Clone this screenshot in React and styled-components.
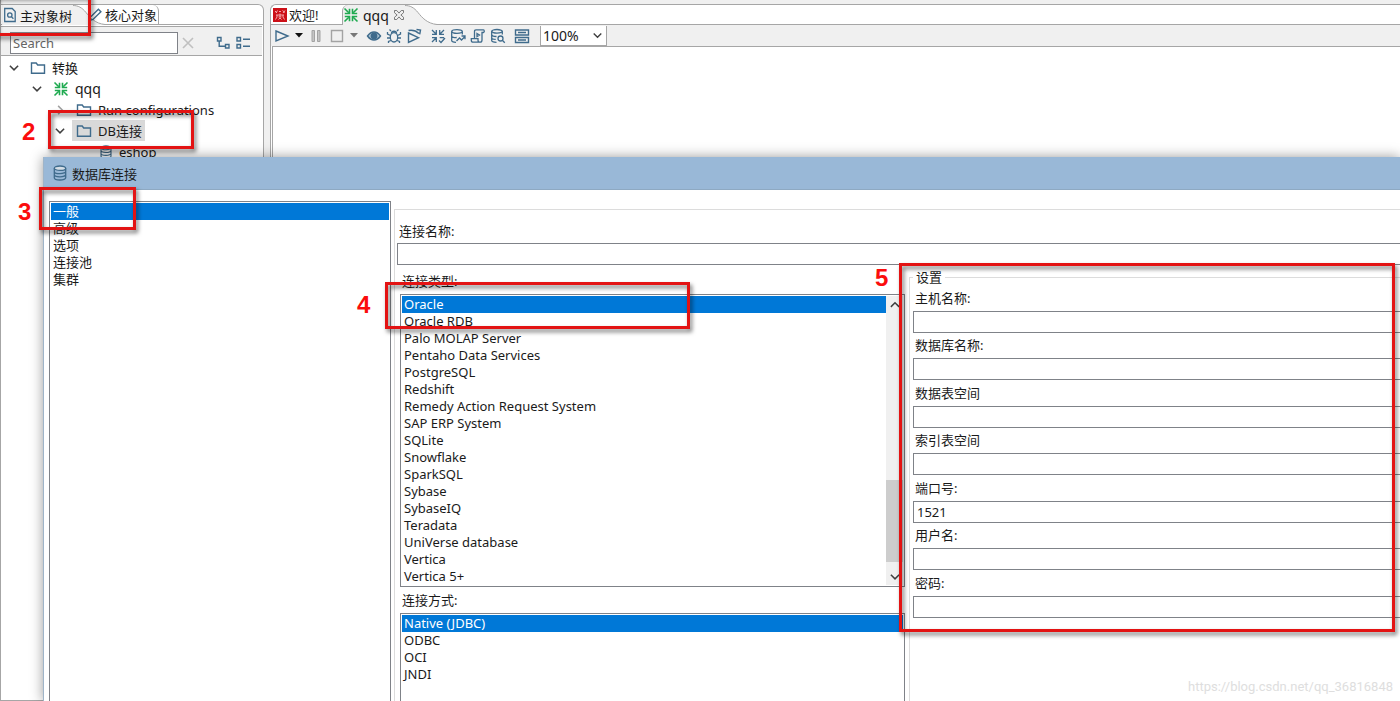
import React, { useState } from 'react';
import styled, { createGlobalStyle, css } from 'styled-components';

const colors = {
  chrome: '#f0f0f0',
  line: '#a6a6a6',
  softLine: '#dcdcdc',
  field: '#7f8288',
  icon: '#3f6b8c',
  green: '#1faa50',
  select: '#0078d7',
  title: '#99b8d7',
  mark: '#e31313',
};

const categories = ['一般', '高级', '选项', '连接池', '集群'];

const databases = [
  'Oracle',
  'Oracle RDB',
  'Palo MOLAP Server',
  'Pentaho Data Services',
  'PostgreSQL',
  'Redshift',
  'Remedy Action Request System',
  'SAP ERP System',
  'SQLite',
  'Snowflake',
  'SparkSQL',
  'Sybase',
  'SybaseIQ',
  'Teradata',
  'UniVerse database',
  'Vertica',
  'Vertica 5+',
];

const accessTypes = ['Native (JDBC)', 'ODBC', 'OCI', 'JNDI'];

const settings = [
  { id: 'host', label: '主机名称:' },
  { id: 'database', label: '数据库名称:' },
  { id: 'dataSpace', label: '数据表空间' },
  { id: 'indexSpace', label: '索引表空间' },
  { id: 'port', label: '端口号:', value: '1521' },
  { id: 'user', label: '用户名:' },
  { id: 'password', label: '密码:', type: 'password' },
];

const tree = [
  { label: '转换', depth: 0, icon: 'folder', open: true },
  { label: 'qqq', depth: 1, icon: 'transform', open: true, large: true },
  { label: 'Run configurations', depth: 2, icon: 'folder', open: false },
  { label: 'DB连接', depth: 2, icon: 'folder', open: true, selected: true },
  { label: 'eshop', depth: 3, icon: 'database' },
];

/* Icons */

const Icon = ({ size = 16, color = colors.icon, width = 1.4, children }) => (
  <svg
    width={size}
    height={size}
    viewBox="0 0 16 16"
    fill="none"
    stroke={color}
    strokeWidth={width}
    aria-hidden="true"
  >
    {children}
  </svg>
);

const FolderIcon = () => (
  <Icon>
    <path d="M1.500 13.300V3h4.700l1.500 2h6.800v8.300z" />
  </Icon>
);

const TransformIcon = () => (
  <Icon color={colors.green} width={1.6}>
    <path d="M1.500 1.500l4.300 4.300M14.500 1.500l-4.300 4.300M1.500 14.500l4.300-4.300M14.500 14.500l-4.300-4.300" />
    <path d="M6.500 1.800v4.700H1.800M9.500 1.800v4.700h4.700M6.500 14.200V9.500H1.800M9.500 14.200V9.500h4.700" />
  </Icon>
);

const DatabaseIcon = ({ size = 16 }) => (
  <Icon size={size} width={1.3}>
    <ellipse cx="8" cy="3.200" rx="5.700" ry="2.200" fill="#d5dee6" />
    <path d="M2.300 3.200v9.600c0 1.200 2.500 2.200 5.700 2.200s5.700-1 5.700-2.200V3.200M2.300 6.400c0 1.200 2.500 2.200 5.700 2.200s5.700-1 5.700-2.200M2.300 9.600c0 1.200 2.500 2.200 5.700 2.200s5.700-1 5.700-2.200" />
  </Icon>
);

const TreeDocIcon = () => (
  <Icon width={1.3}>
    <path d="M2.700 1.500h7.500l3 3v10H2.700z" />
    <circle cx="7.800" cy="8" r="2.200" />
    <path d="M9.400 9.600l2 2.200" />
  </Icon>
);

const PencilIcon = () => (
  <Icon>
    <path d="M2.500 13.500l1-3.500L11.400 2.200l2.500 2.500L6 12.500z" />
  </Icon>
);

const ClearIcon = () => (
  <Icon color="#c0c0c0" width={1.6}>
    <path d="M3 3l10 10M13 3L3 13" />
  </Icon>
);

const ExpandIcon = () => (
  <Icon>
    <path d="M2.500 2.500h3.500v3.500H2.500zM10.500 9.500H14V13h-3.500zM4.200 6v5.300h6.300" />
  </Icon>
);

const CollapseIcon = () => (
  <Icon>
    <path d="M2 2.500h3.500V6H2zM2 9.500h3.500V13H2zM8 4.200h7M8 11.300h7" />
  </Icon>
);

const CloseTabIcon = () => (
  <Icon size={12} color="#6e6e6e" width={1.2}>
    <path d="M2 2h3l3 3.500L11 2h3v3l-3.500 3 3.500 3v3h-3l-3-3.500L5 14H2v-3l3.500-3L2 5z" />
  </Icon>
);

const WelcomeIcon = () => (
  <svg width="14" height="14" viewBox="0 0 14 14" aria-hidden="true">
    <rect width="14" height="14" fill="#cc1017" />
    <path
      d="M2 3l2 2M4.500 2.500L3 5M6 3.500h2M9.500 2.500l2.500 2M12 2.500L10 5M3 7h8M4 7v2l-1.500 2.500M10 7v2l1.500 2.500M5.500 9h3M7 5.500V9M5.500 11.500L7 10l1.500 1.500"
      stroke="#f7b9bb"
      strokeWidth="0.9"
      fill="none"
    />
  </svg>
);

const RunIcon = () => (
  <Icon>
    <path d="M2 3l12 5L2 13z" />
  </Icon>
);

const PauseIcon = () => (
  <Icon color="#a3a3a3" width={1}>
    <path d="M4 2.500h2.500v11H4zM9.500 2.500H12v11H9.500z" fill="#c4c4c4" />
  </Icon>
);

const StopIcon = () => (
  <Icon color="#a3a3a3">
    <path d="M2.500 2.500h11v11h-11z" />
  </Icon>
);

const PreviewIcon = () => (
  <Icon>
    <path d="M1.500 8c2-2.800 4-4 6.500-4s4.500 1.200 6.500 4c-2 2.800-4 4-6.500 4S3.500 10.800 1.500 8z" fill="#a9c0d1" />
    <circle cx="8" cy="8" r="2.700" fill={colors.icon} />
  </Icon>
);

const DebugIcon = () => (
  <Icon width={1.3}>
    <ellipse cx="8" cy="9.300" rx="3.700" ry="4.700" />
    <path d="M5.500 5.500c0-3 5-3 5 0M5 3L3.500 1.500M11 3l1.500-1.500M4.500 7.500L1.500 6V4M11.500 7.500l3-1.500V4M4.300 10H1M11.700 10H15M5 12.500l-2.500 1V15M11 12.500l2.500 1V15" />
  </Icon>
);

const ReplayIcon = () => (
  <Icon>
    <path d="M2.500 5l10 4.700-10 4.800zM2.500 2.500c4-.8 7.500.2 10.500 3M10.500 1.500l4 .5-.8 4.300" />
  </Icon>
);

const VerifyIcon = () => (
  <Icon width={1.3}>
    <path d="M2 2l4 4M14 2l-4 4M2 14l4-4M6.300 2v4.300H2M9.700 2v4.300H14M6.300 14V9.700H2M9.700 9.700H14M9 12.500l2 2 4-4.500" />
  </Icon>
);

const ImpactIcon = () => (
  <Icon width={1.3}>
    <ellipse cx="7" cy="3.500" rx="5.300" ry="1.800" />
    <path d="M1.700 3.500v9c0 1 2 1.800 4.300 1.800M12.300 3.500v3M1.700 8c0 1.300 3 1.800 5 1.500M6.500 13l3-3 2 2 3.500-3.500M11.500 8H15v3.300" />
  </Icon>
);

const SqlIcon = () => (
  <Icon width={1.3}>
    <path d="M4.500 10.500V3.500c0-1 .5-1.700 1.500-1.700h7.500c1 0 1 2.700 0 2.700H12V12c0 1.300-.8 2.200-2 2.200H3c-1.300 0-1.700-1-1.700-2v-1.500H8V12c0 1 .5 2.200 1.800 2.200" />
    <path d="M7 5.500l2.500 1.500L7 8.500z" />
  </Icon>
);

const ExploreIcon = () => (
  <Icon width={1.3}>
    <ellipse cx="7" cy="3.300" rx="5.300" ry="1.800" />
    <path d="M1.700 3.300v9.200c0 1 2 1.800 4.800 1.800M12.300 3.300v3.200M1.700 6.500C1.700 8 4 8.500 6.500 8.500M1.700 9.800c0 1 2 1.600 4 1.600" />
    <circle cx="10.500" cy="10.500" r="2.500" />
    <path d="M12.300 12.300l2.500 2.500" />
  </Icon>
);

const ResultsIcon = () => (
  <Icon>
    <path d="M1.500 2h13v5h-13zM1.500 9.500h13v5h-13zM4 4.500h8M4 12h8" />
  </Icon>
);

const Chevron = ({ dir = 'down', color = '#404040', size = 12 }) => {
  const paths = {
    down: 'M2.500 5l5.500 5.500L13.500 5',
    up: 'M2.500 10.500L8 5l5.500 5.500',
    right: 'M5.500 2.500L11 8l-5.500 5.500',
  };
  return (
    <Icon size={size} color={color} width={2}>
      <path d={paths[dir]} />
    </Icon>
  );
};

const Caret = ({ color = '#111' }) => (
  <svg width="8" height="5" viewBox="0 0 8 5" aria-hidden="true">
    <path d="M0 0h8L4 4.500z" fill={color} />
  </svg>
);

// Slanted right edge of the active tab
const TabEdge = () => (
  <svg width="32" height="20" viewBox="0 0 32 20" aria-hidden="true">
    <path d="M0 .5c5 0 9 2 13 7s9 11 19 12V20H0z" fill={colors.chrome} />
    <path d="M0 .5c5 0 9 2 13 7s9 11 19 12" fill="none" stroke={colors.line} />
  </svg>
);

const treeIcons = {
  folder: <FolderIcon />,
  transform: <TransformIcon />,
  database: <DatabaseIcon size={14} />,
};

const ListBox = ({ label, items, scroll, grow }) => {
  const [active, setActive] = useState(items[0]);

  return (
    <ListFrame $grow={grow}>
      <List role="listbox" aria-label={label}>
        {items.map((item) => (
          <ListItem
            key={item}
            role="option"
            aria-selected={item === active}
            $active={item === active}
            onClick={() => setActive(item)}
          >
            {item}
          </ListItem>
        ))}
      </List>
      {scroll && (
        <ScrollBar>
          <ScrollButton type="button" aria-label="Scroll up">
            <Chevron dir="up" />
          </ScrollButton>
          <ScrollThumb />
          <ScrollButton type="button" aria-label="Scroll down">
            <Chevron />
          </ScrollButton>
        </ScrollBar>
      )}
    </ListFrame>
  );
};

const Explorer = () => (
  <ExplorerPane>
    <TabBar>
      <Tab type="button" $active>
        <TreeDocIcon />
        主对象树
      </Tab>
      <TabEdgeSlot>
        <TabEdge />
      </TabEdgeSlot>
      <Tab type="button" $last>
        <PencilIcon />
        核心对象
      </Tab>
    </TabBar>
    <SearchBar>
      <SearchInput placeholder="Search" aria-label="Search" />
      <IconButton type="button" aria-label="Clear">
        <ClearIcon />
      </IconButton>
      <SearchActions>
        <IconButton type="button" aria-label="Expand all">
          <ExpandIcon />
        </IconButton>
        <IconButton type="button" aria-label="Collapse all">
          <CollapseIcon />
        </IconButton>
      </SearchActions>
    </SearchBar>
    <Tree role="tree">
      {tree.map((node) => (
        <TreeRow key={node.label} role="treeitem" $depth={node.depth}>
          <TreeToggle>
            {node.open === true && <Chevron />}
            {node.open === false && <Chevron dir="right" color="#a0a0a0" />}
          </TreeToggle>
          <TreeLabel $selected={node.selected} $large={node.large}>
            {treeIcons[node.icon]}
            {node.label}
          </TreeLabel>
        </TreeRow>
      ))}
    </Tree>
  </ExplorerPane>
);

const Editor = () => (
  <EditorPane>
    <TabBar>
      <Tab type="button" $wide>
        <WelcomeIcon />
        欢迎!
      </Tab>
      <Tab type="button" $active $large>
        <TransformIcon />
        qqq
        <CloseTabIcon />
      </Tab>
      <TabEdgeSlot>
        <TabEdge />
      </TabEdgeSlot>
    </TabBar>
    <Toolbar>
      <ToolGroup $loose>
        <IconButton type="button" aria-label="Run"><RunIcon /></IconButton>
        <IconButton type="button" aria-label="Run options"><Caret /></IconButton>
        <IconButton type="button" aria-label="Pause"><PauseIcon /></IconButton>
        <IconButton type="button" aria-label="Stop"><StopIcon /></IconButton>
        <IconButton type="button" aria-label="Stop options"><Caret color="#777" /></IconButton>
      </ToolGroup>
      <ToolGroup>
        <IconButton type="button" aria-label="Preview"><PreviewIcon /></IconButton>
        <IconButton type="button" aria-label="Debug"><DebugIcon /></IconButton>
        <IconButton type="button" aria-label="Replay"><ReplayIcon /></IconButton>
      </ToolGroup>
      <ToolGroup>
        <IconButton type="button" aria-label="Verify"><VerifyIcon /></IconButton>
        <IconButton type="button" aria-label="Impact"><ImpactIcon /></IconButton>
        <IconButton type="button" aria-label="SQL"><SqlIcon /></IconButton>
        <IconButton type="button" aria-label="Explore database"><ExploreIcon /></IconButton>
      </ToolGroup>
      <IconButton type="button" aria-label="Show results"><ResultsIcon /></IconButton>
      <ZoomBox>
        <ZoomSelect aria-label="Zoom" defaultValue="100%">
          <option>200%</option>
          <option>100%</option>
          <option>50%</option>
        </ZoomSelect>
        <Chevron size={11} />
      </ZoomBox>
    </Toolbar>
    <Canvas />
  </EditorPane>
);

const ConnectionDialog = () => (
  <Dialog role="dialog" aria-labelledby="dialog-title">
    <TitleBar id="dialog-title">
      <DatabaseIcon />
      数据库连接
    </TitleBar>
    <DialogBody>
      <CategoryColumn>
        <ListBox label="类别" items={categories} grow />
      </CategoryColumn>
      <Panel>
        <FieldLabel htmlFor="name">连接名称:</FieldLabel>
        <TextInput id="name" />
        <PanelColumns>
          <TypeColumn>
            <ListTitle>连接类型:</ListTitle>
            <ListBox label="连接类型" items={databases} scroll />
            <ListTitle>连接方式:</ListTitle>
            <ListBox label="连接方式" items={accessTypes} grow />
          </TypeColumn>
          <Settings>
            <Legend>设置</Legend>
            <SettingsGrid>
              {settings.map(({ id, label, value, type = 'text' }) => (
                <Field key={id}>
                  <SettingLabel htmlFor={id}>{label}</SettingLabel>
                  <TextInput id={id} type={type} defaultValue={value} />
                </Field>
              ))}
            </SettingsGrid>
          </Settings>
        </PanelColumns>
      </Panel>
    </DialogBody>
  </Dialog>
);

const App = () => (
  <Desktop>
    <GlobalStyle />
    <Workbench>
      <Explorer />
      <Editor />
    </Workbench>
    <ConnectionDialog />
    <Mark $left={-6} $top={-6} $width={97} $height={42} />
    <Mark $left={48} $top={110} $width={146} $height={39} />
    <Mark $left={39} $top={187} $width={97} $height={43} />
    <Mark $left={385} $top={282} $width={305} $height={47} />
    <Mark $left={899} $top={263} $width={496} $height={369} />
    <Step $left={22} $top={118}>2</Step>
    <Step $left={18} $top={198}>3</Step>
    <Step $left={357} $top={291}>4</Step>
    <Step $left={875} $top={264}>5</Step>
    <Watermark>https://blog.csdn.net/qq_36816848</Watermark>
  </Desktop>
);

// Styled Components
const GlobalStyle = createGlobalStyle`
  * {
    box-sizing: border-box;
  }

  body {
    margin: 0;
  }

  body, button, input, select {
    font-family: 'Noto Sans', 'Noto Sans CJK SC', sans-serif;
    font-size: 13px;
    color: #1a1a1a;
  }

  svg {
    display: block;
    flex: none;
  }
`;

const Desktop = styled.div`
  position: relative;
  display: flex;
  min-height: 100vh;
  overflow: hidden;
  background-color: ${colors.chrome};
`;

const Workbench = styled.div`
  display: flex;
  flex: 1;
  gap: 6px;
  padding-top: 4px;
  border-left: 1px solid ${colors.line};
`;

const ExplorerPane = styled.section`
  display: flex;
  flex-direction: column;
  width: 263px;
  border: 1px solid ${colors.line};
  border-left: none;
  border-top-right-radius: 6px;
  background-color: white;
`;

const EditorPane = styled.section`
  display: flex;
  flex: 1;
  flex-direction: column;
  border: 1px solid ${colors.line};
  border-right: none;
  border-top-left-radius: 6px;
  background-color: white;
`;

const TabBar = styled.div`
  display: flex;
  height: 20px;
  padding-left: 1px;
  border-bottom: 1px solid ${colors.line};
`;

const Tab = styled.button`
  display: flex;
  align-items: center;
  gap: 2px;
  height: 19px;
  padding: 0 1px 0 0;
  border: none;
  background: none;
  font-size: ${(props) => (props.$large ? '14px' : '13px')};
  white-space: nowrap;

  ${(props) => props.$wide && css`
    width: 70px;
    padding-left: 1px;
  `}

  ${(props) => props.$large && css`
    gap: 4px;
    padding: 0;
    border-left: 1px solid ${colors.line};
    border-top-left-radius: 6px;
  `}

  ${(props) => props.$active && css`
    height: 20px;
    background-color: ${colors.chrome};
  `}

  ${(props) => props.$last && css`
    border-right: 1px solid ${colors.line};
    border-top-right-radius: 6px;
  `}
`;

const TabEdgeSlot = styled.span`
  width: 14px;
  height: 20px;
`;

const SearchBar = styled.div`
  display: flex;
  align-items: center;
  height: 30px;
  margin: 1px 1px 0 0;
  padding: 4px 0 0 9px;
  border-top: 1px solid ${colors.line};
  border-bottom: 1px solid ${colors.line};
  background-color: ${colors.chrome};
`;

const SearchInput = styled.input`
  width: 168px;
  height: 22px;
  margin-right: 2px;
  padding: 0 2px;
  border: 1px solid ${colors.field};
  background-color: white;

  &::placeholder {
    color: #666;
    opacity: 1;
  }
`;

const SearchActions = styled.div`
  display: flex;
  gap: 4px;
  margin-left: 19px;
`;

const IconButton = styled.button`
  display: flex;
  align-items: center;
  justify-content: center;
  padding: 0;
  border: none;
  background: none;
`;

const Tree = styled.ul`
  margin: 0;
  padding: 1px 0 0;
  list-style: none;
`;

const TreeRow = styled.li`
  display: flex;
  align-items: center;
  height: 21px;
  padding-left: ${(props) => 7 + props.$depth * 23}px;
`;

const TreeToggle = styled.span`
  width: 18px;
`;

const TreeLabel = styled.span`
  display: flex;
  align-items: center;
  gap: 6px;
  height: 21px;
  padding: 0 3px 0 4px;
  font-size: ${(props) => (props.$large ? '14px' : '13px')};
  background-color: ${(props) => (props.$selected ? '#d9d9d9' : 'transparent')};
`;

const Toolbar = styled.div`
  display: flex;
  align-items: center;
  gap: 8px;
  height: 21px;
  padding-left: 3px;
  background-color: ${colors.chrome};
`;

const ToolGroup = styled.div`
  display: flex;
  align-items: center;
  gap: ${(props) => (props.$loose ? '5px' : '4px')};
`;

const ZoomBox = styled.label`
  display: flex;
  align-items: center;
  width: 67px;
  height: 20px;
  margin-left: 2px;
  padding-right: 3px;
  border: 1px solid ${colors.line};
  border-top: none;
  background-color: white;
`;

const ZoomSelect = styled.select`
  flex: 1;
  min-width: 0;
  padding: 0 2px;
  border: none;
  background: none;
  font-size: 14px;
  appearance: none;
`;

const Canvas = styled.div`
  flex: 1;
  margin-left: 1px;
  border-top: 1px solid ${colors.line};
  border-left: 1px solid ${colors.line};
`;

const Dialog = styled.div`
  position: absolute;
  top: 157px;
  right: 0;
  bottom: 0;
  left: 43px;
  display: flex;
  flex-direction: column;
  border-left: 1px solid #9fb4c8;
  background-color: white;
  box-shadow: 0 0 12px rgba(0, 0, 0, 0.4);
`;

const TitleBar = styled.header`
  display: flex;
  align-items: center;
  gap: 4px;
  height: 33px;
  padding-left: 8px;
  border-bottom: 1px solid #8ea9c2;
  background-color: ${colors.title};
`;

const DialogBody = styled.div`
  display: flex;
  flex: 1;
  gap: 3px;
  padding: 11px 0 0 5px;
`;

const CategoryColumn = styled.div`
  display: flex;
  flex-direction: column;
  width: 342px;
`;

const ListFrame = styled.div`
  display: flex;
  flex: ${(props) => (props.$grow ? '1' : 'none')};
  padding: 1px;
  border: 1px solid ${colors.field};
  border-bottom-width: ${(props) => (props.$grow ? '0' : '1px')};
  background-color: white;
`;

const List = styled.ul`
  flex: 1;
  margin: 0;
  padding: 0;
  list-style: none;
`;

const ListItem = styled.li`
  height: 17px;
  padding-left: 2px;
  line-height: 16px;
  white-space: nowrap;
  color: ${(props) => (props.$active ? 'white' : 'inherit')};
  background-color: ${(props) => (props.$active ? colors.select : 'transparent')};
`;

const ScrollBar = styled.div`
  display: flex;
  flex-direction: column;
  justify-content: flex-end;
  width: 17px;
  background-color: ${colors.chrome};
`;

const ScrollButton = styled.button`
  display: flex;
  align-items: center;
  justify-content: center;
  height: 17px;
  padding: 0;
  border: none;
  background: none;

  &:first-child {
    margin-bottom: auto;
  }
`;

const ScrollThumb = styled.div`
  height: 82px;
  margin-bottom: 6px;
  background-color: #cdcdcd;
`;

const Panel = styled.div`
  display: flex;
  flex: 1;
  flex-direction: column;
  margin-top: 8px;
  padding: 12px 0 0 2px;
  border-top: 1px solid ${colors.softLine};
  border-left: 1px solid ${colors.softLine};
`;

const FieldLabel = styled.label`
  height: 21px;
  padding-left: 2px;
  line-height: 18px;
`;

const TextInput = styled.input`
  width: 100%;
  height: 22px;
  padding: 0 3px;
  border: 1px solid ${colors.field};
  border-right: none;
  background-color: white;
`;

const PanelColumns = styled.div`
  display: flex;
  flex: 1;
  gap: 4px;
  padding-left: 3px;
`;

const TypeColumn = styled.div`
  display: flex;
  flex-direction: column;
  width: 505px;
  padding-top: 3px;
`;

const ListTitle = styled.div`
  height: 26px;
  padding-left: 2px;
  line-height: 27px;
`;

const Settings = styled.fieldset`
  flex: 1;
  min-width: 0;
  margin: 3px 0 0;
  padding: 0 0 0 3px;
  border: 1px solid ${colors.softLine};
  border-right: none;
  border-bottom: none;
`;

const Legend = styled.legend`
  padding: 0 3px;
  line-height: 18px;
`;

const SettingsGrid = styled.div`
  display: grid;
  grid-auto-rows: 1fr;
  height: 332px;
`;

const Field = styled.div`
  display: flex;
  flex-direction: column;
`;

const SettingLabel = styled.label`
  height: 25px;
  padding-left: 2px;
  line-height: 24px;
`;

const Mark = styled.div`
  position: absolute;
  left: ${(props) => props.$left}px;
  top: ${(props) => props.$top}px;
  width: ${(props) => props.$width}px;
  height: ${(props) => props.$height}px;
  border: 3px solid ${colors.mark};
  filter: drop-shadow(2px 3px 2px rgba(0, 0, 0, 0.55));
  pointer-events: none;
`;

const Step = styled.span`
  position: absolute;
  left: ${(props) => props.$left}px;
  top: ${(props) => props.$top}px;
  color: #fb0d0d;
  font-family: 'Liberation Sans', sans-serif;
  font-size: 24px;
  font-weight: bold;
`;

const Watermark = styled.span`
  position: absolute;
  right: 7px;
  bottom: 7px;
  color: #dedede;
  font-family: Roboto, sans-serif;
  font-size: 13px;
`;

export default App;
